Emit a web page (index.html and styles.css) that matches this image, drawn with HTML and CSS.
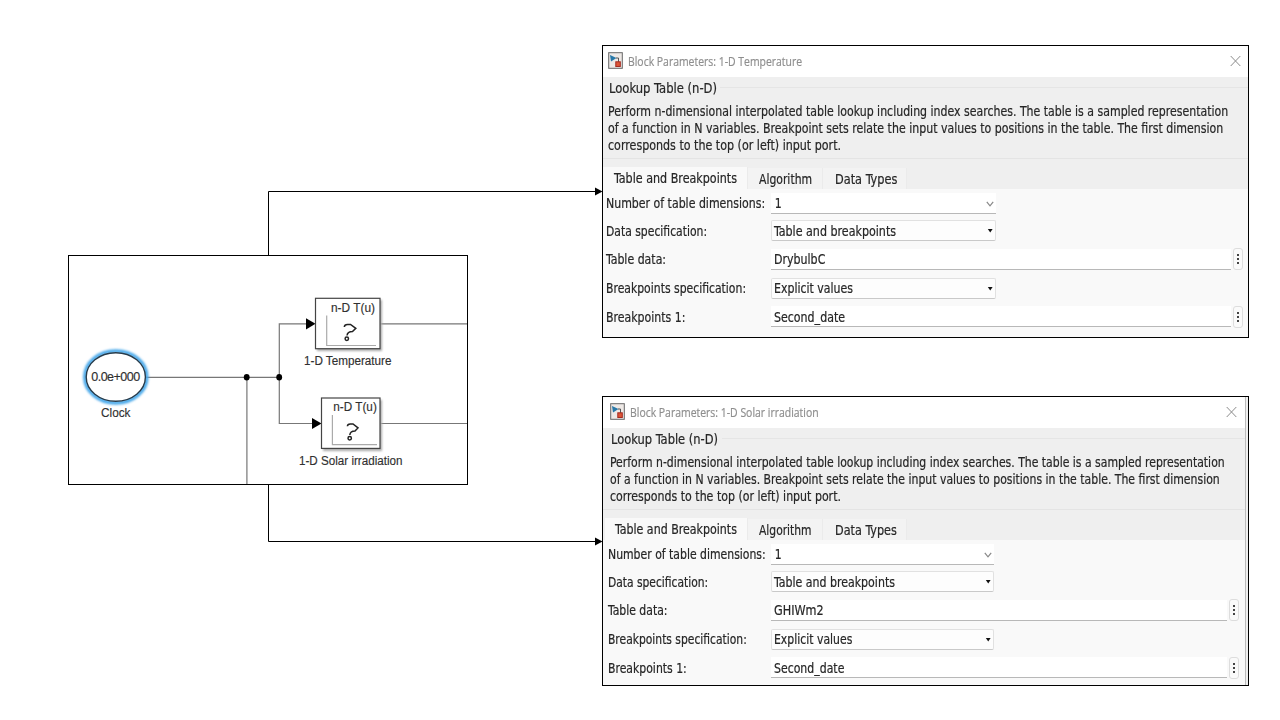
FILE: index.html
```html
<!DOCTYPE html>
<html lang="en">
<head>
<meta charset="utf-8">
<title>Lookup table block parameters</title>
<link rel="stylesheet" href="styles.css">
</head>
<body>
<main class="page">
  <svg class="diagram" width="602" height="720" viewBox="0 0 602 720">
    <defs>
      <filter id="glow" x="-20%" y="-20%" width="140%" height="140%"><feGaussianBlur stdDeviation="0.9"/></filter>
      <filter id="shadow" x="-10%" y="-10%" width="130%" height="130%"><feGaussianBlur stdDeviation="0.8"/></filter>
    </defs>
    <g class="callout">
      <path d="M268.5 255V191.500H596"/>
      <path d="M268.500 485V541.500H596"/>
      <path class="solid" d="M595 187.500L602.500 191.500L595 195.500Z"/>
      <path class="solid" d="M595 537.500L602.500 541.500L595 545.500Z"/>
      <rect class="frame" x="68.500" y="255.500" width="399" height="229"/>
    </g>
    <g class="wire">
      <path d="M146 377.300H279.300"/>
      <path d="M246.900 377V484"/>
      <path d="M306 323.800H279.300V423.500H312"/>
      <path d="M380 323.800H467"/>
      <path d="M380 423.500H467"/>
    </g>
    <g class="solid">
      <ellipse cx="246.700" cy="377.300" rx="2.900" ry="3.300"/>
      <ellipse cx="279.200" cy="377.300" rx="2.900" ry="3.300"/>
      <path d="M306 318.200L315.500 323.800L306 329.400Z"/>
      <path d="M312 417.900L321.500 423.500L312 429.100Z"/>
    </g>
    <ellipse class="halo" cx="115.800" cy="377" rx="31" ry="26" filter="url(#glow)"/>
    <ellipse class="clock" cx="115.800" cy="377" rx="29.600" ry="24.300"/>
    <text x="91.200" y="381" textLength="49">0.0e+000</text>
    <text x="101" y="417" textLength="29.500" lengthAdjust="spacingAndGlyphs">Clock</text>

    <rect class="shade" x="317" y="300" width="65" height="51" filter="url(#shadow)"/>
    <rect class="block" x="315.500" y="298.300" width="64.500" height="50.400"/>
    <path class="axis" d="M326.700 315.500V345.500H376"/>
    <path class="mark" d="M344.300 327Q344.500 324.500 347.500 324.500H350.500L355.800 328.400L352.500 331.500Q347.500 331.500 347 335.500"/>
    <circle class="mark" cx="346.800" cy="338.800" r="1.700"/>
    <text x="331" y="312" textLength="44" lengthAdjust="spacingAndGlyphs">n-D T(u)</text>
    <text x="304" y="365" textLength="87.500" lengthAdjust="spacingAndGlyphs">1-D Temperature</text>

    <rect class="shade" x="323" y="400" width="59" height="51" filter="url(#shadow)"/>
    <rect class="block" x="321.500" y="398" width="58.500" height="50.400"/>
    <path class="axis" d="M332.400 415V444.700H377"/>
    <path class="mark" d="M347.400 426.300Q347.500 424 350.200 424H353L358 427.900L355 431Q350.200 431 349.800 435"/>
    <circle class="mark" cx="349.700" cy="438.200" r="1.700"/>
    <text x="333.300" y="411.300" textLength="43.500" lengthAdjust="spacingAndGlyphs">n-D T(u)</text>
    <text x="299" y="465" textLength="103.500" lengthAdjust="spacingAndGlyphs">1-D Solar irradiation</text>
  </svg>

  <div class="dialogs">
    <section class="dialog">
      <header class="titlebar">
        <svg class="appicon" width="15" height="17" viewBox="0 0 15 17"><rect x=".7" y=".7" width="13.600" height="15.600" fill="#eee9e6" stroke="#666"/><path d="M2 3L8.500 6L3 9.500Z" fill="#2878a8"/><path d="M8 6H10.500V10" fill="none" stroke="#555"/><rect x="7.800" y="9.800" width="4.500" height="4.700" fill="#dd5535" stroke="#a52a20"/></svg>
        <h1 class="title t-temp">Block Parameters: 1-D Temperature</h1>
        <svg class="close" width="11" height="12" viewBox="0 0 11 12"><path d="M.7 1L10.300 11M10.300 1L.7 11"/></svg>
      </header>
      <div class="summary">
        <div class="legend"><span class="s-legend">Lookup Table (n-D)</span></div>
        <p class="s-l1">Perform n-dimensional interpolated table lookup including index searches. The table is a sampled representation</p>
        <p class="s-l2">of a function in N variables. Breakpoint sets relate the input values to positions in the table. The first dimension</p>
        <p class="s-l3">corresponds to the top (or left) input port.</p>
      </div>
      <nav class="tabs">
        <div class="tab active"><span class="s-tab1">Table and Breakpoints</span></div>
        <div class="tab tab-b"><span class="s-tab2">Algorithm</span></div>
        <div class="tab tab-c"><span class="s-tab3">Data Types</span></div>
      </nav>
      <div class="form">
        <div class="row r1"><label class="s-num">Number of table dimensions:</label><div class="field short"><span class="one">1</span><svg class="arrow" width="8" height="6" viewBox="0 0 8 6"><path class="chev" d="M.8 .8L4 4.800L7.200 .8"/></svg></div></div>
        <div class="row r2"><label class="s-spec">Data specification:</label><div class="field short combo"><span class="s-tb">Table and breakpoints</span><svg class="arrow" width="8" height="6" viewBox="0 0 8 6"><path d="M1.800 1H6.600L4.200 4.600Z"/></svg></div></div>
        <div class="row r3"><label class="s-data">Table data:</label><div class="field"><span class="s-val">DrybulbC</span></div><button class="more"><i></i><i></i><i></i></button></div>
        <div class="row r4"><label class="s-bspec">Breakpoints specification:</label><div class="field short combo"><span class="s-ev">Explicit values</span><svg class="arrow" width="8" height="6" viewBox="0 0 8 6"><path d="M1.800 1H6.600L4.200 4.600Z"/></svg></div></div>
        <div class="row r5"><label class="s-b1">Breakpoints 1:</label><div class="field"><span class="s-val">Second_date</span></div><button class="more"><i></i><i></i><i></i></button></div>
      </div>
    </section>

    <section class="dialog solar">
      <header class="titlebar">
        <svg class="appicon" width="15" height="17" viewBox="0 0 15 17"><rect x=".7" y=".7" width="13.600" height="15.600" fill="#eee9e6" stroke="#666"/><path d="M2 3L8.500 6L3 9.500Z" fill="#2878a8"/><path d="M8 6H10.500V10" fill="none" stroke="#555"/><rect x="7.800" y="9.800" width="4.500" height="4.700" fill="#dd5535" stroke="#a52a20"/></svg>
        <h1 class="title t-solar">Block Parameters: 1-D Solar irradiation</h1>
        <svg class="close" width="11" height="12" viewBox="0 0 11 12"><path d="M.7 1L10.300 11M10.300 1L.7 11"/></svg>
      </header>
      <div class="summary">
        <div class="legend"><span class="s-legend">Lookup Table (n-D)</span></div>
        <p class="s-l1">Perform n-dimensional interpolated table lookup including index searches. The table is a sampled representation</p>
        <p class="s-l2">of a function in N variables. Breakpoint sets relate the input values to positions in the table. The first dimension</p>
        <p class="s-l3">corresponds to the top (or left) input port.</p>
      </div>
      <nav class="tabs">
        <div class="tab active"><span class="s-tab1">Table and Breakpoints</span></div>
        <div class="tab tab-b"><span class="s-tab2">Algorithm</span></div>
        <div class="tab tab-c"><span class="s-tab3">Data Types</span></div>
      </nav>
      <div class="form">
        <div class="row r1"><label class="s-num">Number of table dimensions:</label><div class="field short"><span class="one">1</span><svg class="arrow" width="8" height="6" viewBox="0 0 8 6"><path class="chev" d="M.8 .8L4 4.800L7.200 .8"/></svg></div></div>
        <div class="row r2"><label class="s-spec">Data specification:</label><div class="field short combo"><span class="s-tb">Table and breakpoints</span><svg class="arrow" width="8" height="6" viewBox="0 0 8 6"><path d="M1.800 1H6.600L4.200 4.600Z"/></svg></div></div>
        <div class="row r3"><label class="s-data">Table data:</label><div class="field"><span class="s-ghi">GHIWm2</span></div><button class="more"><i></i><i></i><i></i></button></div>
        <div class="row r4"><label class="s-bspec">Breakpoints specification:</label><div class="field short combo"><span class="s-ev">Explicit values</span><svg class="arrow" width="8" height="6" viewBox="0 0 8 6"><path d="M1.800 1H6.600L4.200 4.600Z"/></svg></div></div>
        <div class="row r5"><label class="s-b1">Breakpoints 1:</label><div class="field"><span class="s-val">Second_date</span></div><button class="more"><i></i><i></i><i></i></button></div>
      </div>
    </section>
  </div>
</main>
</body>
</html>
```
FILE: styles.css
```css
* { box-sizing: border-box; }
body { margin: 0; background: #fff; }
.page { display: flex; width: 1280px; height: 720px; overflow: hidden; }

/* block diagram */
.diagram { flex: none; display: block; overflow: visible; }
.diagram text { font: 12.5px "Liberation Sans", Arial, sans-serif; fill: #303030; stroke: #303030; stroke-width: .15px; }
.callout path, .frame { fill: none; stroke: #000; stroke-width: 1; }
.solid, .callout .solid { fill: #000; stroke: none; }
.wire path { fill: none; stroke: #777; stroke-width: 1.200; }
.halo { fill: none; stroke: #49a9ea; stroke-width: 3.600; }
.clock { fill: #fff; stroke: #263b4b; stroke-width: 1.400; }
.shade { fill: #aaa; }
.block { fill: #fff; stroke: #444; stroke-width: 1.200; }
.axis { fill: none; stroke: #aaa; stroke-width: 1.200; }
.mark { fill: none; stroke: #222; stroke-width: 1.500; }

/* dialogs */
.dialogs { display: flex; flex-direction: column; gap: 58px; padding-top: 45px; }
.dialog {
  --inset: 0px; --squeeze: 1; --short: 225px; --long: 460px;
  width: 647px; height: 293px; overflow: hidden;
  border: 1px solid #000; background: #f9f9f9;
  font: 14px/17px "DejaVu Sans Condensed", "DejaVu Sans", sans-serif; color: #262626;
  -webkit-text-stroke: .2px currentColor;
}
.solar {
  --inset: 2px; --squeeze: .991; --short: 223px; --long: 456px;
  height: 290px; padding-right: 3px;
  box-shadow: inset -2px 0 0 #f0f0f0, inset -3px 0 0 #bbb;
}
.dialog span, .dialog label, .dialog p, .title {
  display: block; white-space: nowrap; transform-origin: 0 50%;
  transform: scaleX(calc(var(--k, .871) * var(--squeeze)));
}
.titlebar { display: flex; align-items: center; height: 31px; padding: 0 7px 2px calc(5px + var(--inset)); background: #fff; border-radius: 5px 5px 0 0; }
.solar .titlebar { padding-right: 8px; }
.appicon { flex: none; }
.title { flex: 1; min-width: 0; margin: 0 0 0 5px; font: 13px/18px "Open Sans", "Noto Sans", sans-serif; color: #8e8e8e; }
.t-temp { --k: .802; }
.t-solar { --k: .81; }
.close { flex: none; }
.close path { fill: none; stroke: #8b8b8b; stroke-width: 1; }

.summary { height: 82px; padding-left: calc(5px + var(--inset)); background: #efefef; border-bottom: 1px solid #e4e4e4; }
.legend { display: flex; height: 26px; padding: 3px 0 0 1px; background: linear-gradient(#e5e5e5, #e5e5e5) 112px 10px / 100% 1px no-repeat; }
.summary p { margin: 0; height: 17px; }
.legend span { --k: .92; }
.s-l2 { --k: .873; }
.s-l3 { --k: .882; }

.tabs { display: flex; height: 30px; padding: 8px 0 0 var(--inset); background: #efefef; }
.tab { height: 21px; margin-top: 1px; padding: 3px 0 0 11px; background: #f3f3f3; border-right: 1px solid #ebebeb; }
.active { width: 145px; height: 22px; margin-top: 0; background: #f9f9f9; }
.solar .active { width: 143px; padding-left: 10px; }
.tab-b { width: 75px; padding-left: 11px; }
.tab-c { width: 84px; padding-left: 12px; }
.s-tab1 { --k: .885; }
.s-tab2 { --k: .86; }
.s-tab3 { --k: .9; }

.row { display: flex; align-items: center; height: 28px; padding-left: calc(3px + var(--inset)); }
.r2 { height: 27px; }
.r3 { height: 30px; }
.r5 { height: 29px; }
.row label { flex: none; width: calc(165px - var(--inset)); padding-top: 1px; }
.s-spec { --k: .858; }
.s-bspec { --k: .861; }
.field { display: flex; align-items: center; flex: none; width: var(--long); height: 21px; padding: 2px 4px 0 3px; background: #fff; border-bottom: 1px solid #b8b8b8; }
.short { width: var(--short); }
.combo { padding: 1px 3px 0 2px; background: #fdfdfd; border: 1px solid #e1e1e1; border-bottom-color: #c9c9c9; border-radius: 2px; }
.field .one { padding-left: 1px; }
.s-tb { --k: .882; }
.s-val { --k: .876; }
.s-ghi { --k: .9; }
.arrow { flex: none; margin-left: auto; margin-right: -2px; }
.arrow path { fill: #111; }
.arrow .chev { fill: none; stroke: #888; stroke-width: 1.200; }
.more { display: flex; flex-direction: column; align-items: center; justify-content: center; gap: 2px; flex: none; width: 10px; height: 22px; margin-left: 2px; padding: 0; background: #fafafa; border: 1px solid #ddd; border-radius: 3px; }
.more i { display: block; width: 2px; height: 2px; background: #444; }
```
